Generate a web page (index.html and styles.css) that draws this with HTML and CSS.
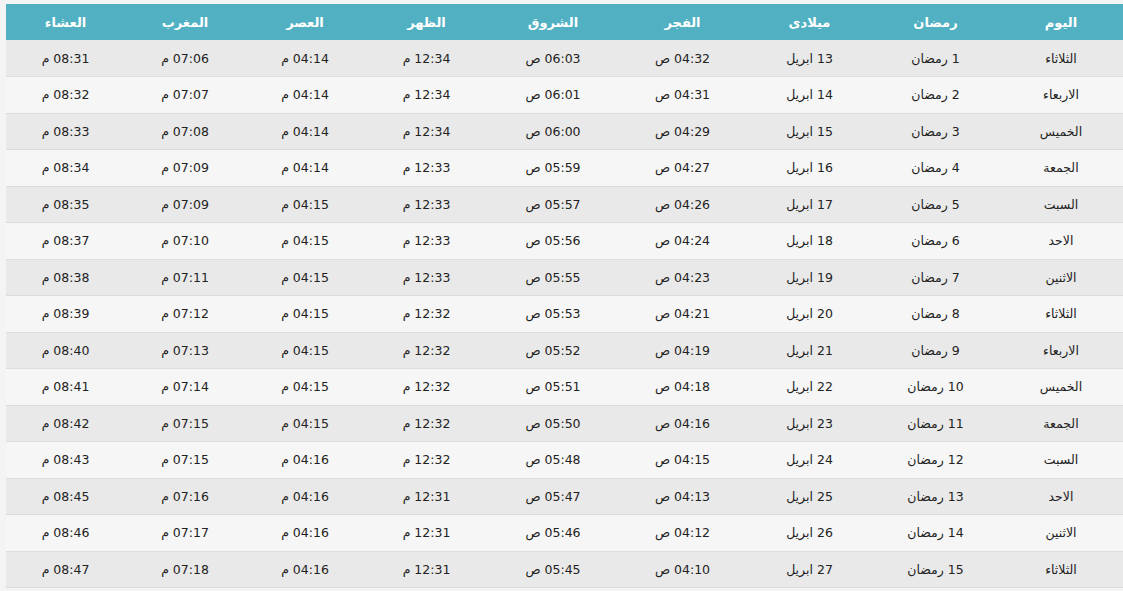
FILE: index.html
```html
<!DOCTYPE html>
<html lang="ar" dir="rtl">
<head>
<meta charset="utf-8">
<title>إمساكية رمضان</title>
<link rel="stylesheet" href="styles.css">
</head>
<body>
<div class="wrap">
<table class="times">
<colgroup>
<col class="c-day"><col class="c-ram"><col class="c-greg"><col class="c-fajr"><col class="c-sun"><col class="c-dhuhr"><col class="c-asr"><col class="c-magh"><col class="c-isha">
</colgroup>
<thead>
<tr><th>اليوم</th><th>رمضان</th><th>ميلادى</th><th>الفجر</th><th>الشروق</th><th>الظهر</th><th>العصر</th><th>المغرب</th><th>العشاء</th></tr>
</thead>
<tbody>
<tr><td>الثلاثاء</td><td>1 رمضان</td><td>13 ابريل</td><td>04:32 ص</td><td>06:03 ص</td><td>12:34 م</td><td>04:14 م</td><td>07:06 م</td><td>08:31 م</td></tr>
<tr><td>الاربعاء</td><td>2 رمضان</td><td>14 ابريل</td><td>04:31 ص</td><td>06:01 ص</td><td>12:34 م</td><td>04:14 م</td><td>07:07 م</td><td>08:32 م</td></tr>
<tr><td>الخميس</td><td>3 رمضان</td><td>15 ابريل</td><td>04:29 ص</td><td>06:00 ص</td><td>12:34 م</td><td>04:14 م</td><td>07:08 م</td><td>08:33 م</td></tr>
<tr><td>الجمعة</td><td>4 رمضان</td><td>16 ابريل</td><td>04:27 ص</td><td>05:59 ص</td><td>12:33 م</td><td>04:14 م</td><td>07:09 م</td><td>08:34 م</td></tr>
<tr><td>السبت</td><td>5 رمضان</td><td>17 ابريل</td><td>04:26 ص</td><td>05:57 ص</td><td>12:33 م</td><td>04:15 م</td><td>07:09 م</td><td>08:35 م</td></tr>
<tr><td>الاحد</td><td>6 رمضان</td><td>18 ابريل</td><td>04:24 ص</td><td>05:56 ص</td><td>12:33 م</td><td>04:15 م</td><td>07:10 م</td><td>08:37 م</td></tr>
<tr><td>الاثنين</td><td>7 رمضان</td><td>19 ابريل</td><td>04:23 ص</td><td>05:55 ص</td><td>12:33 م</td><td>04:15 م</td><td>07:11 م</td><td>08:38 م</td></tr>
<tr><td>الثلاثاء</td><td>8 رمضان</td><td>20 ابريل</td><td>04:21 ص</td><td>05:53 ص</td><td>12:32 م</td><td>04:15 م</td><td>07:12 م</td><td>08:39 م</td></tr>
<tr><td>الاربعاء</td><td>9 رمضان</td><td>21 ابريل</td><td>04:19 ص</td><td>05:52 ص</td><td>12:32 م</td><td>04:15 م</td><td>07:13 م</td><td>08:40 م</td></tr>
<tr><td>الخميس</td><td>10 رمضان</td><td>22 ابريل</td><td>04:18 ص</td><td>05:51 ص</td><td>12:32 م</td><td>04:15 م</td><td>07:14 م</td><td>08:41 م</td></tr>
<tr><td>الجمعة</td><td>11 رمضان</td><td>23 ابريل</td><td>04:16 ص</td><td>05:50 ص</td><td>12:32 م</td><td>04:15 م</td><td>07:15 م</td><td>08:42 م</td></tr>
<tr><td>السبت</td><td>12 رمضان</td><td>24 ابريل</td><td>04:15 ص</td><td>05:48 ص</td><td>12:32 م</td><td>04:16 م</td><td>07:15 م</td><td>08:43 م</td></tr>
<tr><td>الاحد</td><td>13 رمضان</td><td>25 ابريل</td><td>04:13 ص</td><td>05:47 ص</td><td>12:31 م</td><td>04:16 م</td><td>07:16 م</td><td>08:45 م</td></tr>
<tr><td>الاثنين</td><td>14 رمضان</td><td>26 ابريل</td><td>04:12 ص</td><td>05:46 ص</td><td>12:31 م</td><td>04:16 م</td><td>07:17 م</td><td>08:46 م</td></tr>
<tr><td>الثلاثاء</td><td>15 رمضان</td><td>27 ابريل</td><td>04:10 ص</td><td>05:45 ص</td><td>12:31 م</td><td>04:16 م</td><td>07:18 م</td><td>08:47 م</td></tr>
</tbody>
</table>
</div>
</body>
</html>
```
FILE: styles.css
```css
html, body {
  margin: 0;
  padding: 0;
  background: #f4f4f4;
}
body {
  font-family: "DejaVu Sans", "Liberation Sans", sans-serif;
  color: #222;
  overflow: hidden;
}
.wrap {
  padding: 4px 0 0 6px;
}
.times {
  width: 1117px;
  border-collapse: collapse;
  table-layout: fixed;
}
.c-day { width: 124px; }
.c-ram { width: 127px; }
.c-greg { width: 125px; }
.c-fajr { width: 129px; }
.c-sun { width: 130px; }
.c-dhuhr { width: 123px; }
.c-asr { width: 120px; }
.c-magh { width: 120px; }
.c-isha { width: 119px; }
.times th {
  background: #51b1c2;
  color: #fff;
  font-weight: bold;
  font-size: 13px;
  height: 36px;
  padding: 0;
  text-align: center;
  vertical-align: middle;
}
.times td {
  height: 36.53px;
  padding: 0;
  font-size: 12.5px;
  text-align: center;
  vertical-align: middle;
  border-bottom: 1px solid #dcdcdc;
  box-sizing: border-box;
}
.times tbody tr:nth-child(odd) td {
  background: #e9e9e9;
}
.times tbody tr:nth-child(even) td {
  background: #f6f6f6;
}
```
